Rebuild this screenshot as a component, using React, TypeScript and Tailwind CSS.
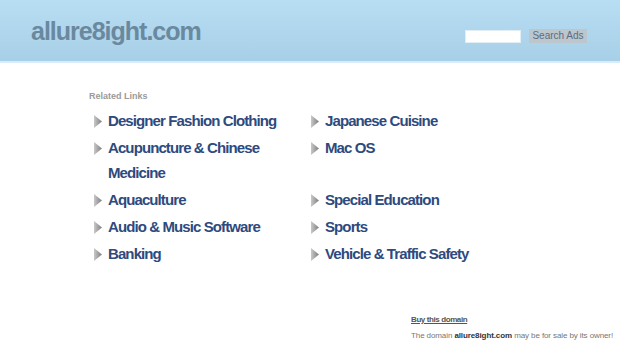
const leftLinks = [
  "Designer Fashion Clothing",
  "Acupuncture & Chinese Medicine",
  "Aquaculture",
  "Audio & Music Software",
  "Banking",
];

const rightLinks = [
  "Japanese Cuisine",
  "Mac OS",
  "Special Education",
  "Sports",
  "Vehicle & Traffic Safety",
];

function Arrow() {
  return (
    <svg width="8" height="13" viewBox="0 0 8 13" className="mt-[7px] shrink-0">
      <defs>
        <linearGradient id="arr" x1="0" y1="0" x2="1" y2="0">
          <stop offset="0" stopColor="#c9c9c9" />
          <stop offset="1" stopColor="#7d7d7d" />
        </linearGradient>
      </defs>
      <polygon points="0,0 8,6.5 0,13" fill="url(#arr)" />
    </svg>
  );
}

function LinkItem({ label }: { label: string }) {
  return (
    <a href="#" className="flex items-start pl-[5px] no-underline">
      <Arrow />
      <span className="ml-[6px] w-[190px] text-[15px] font-bold leading-[25px] tracking-[-0.9px] text-[#2e4a7e]">
        {label}
      </span>
    </a>
  );
}

export default function App() {
  const rows = leftLinks.map((l, i) => [l, rightLinks[i]]);
  return (
    <div className="min-h-[343px] w-[620px] bg-white font-['Liberation_Sans',Arial,sans-serif]">
      <header className="flex h-[63px] items-start justify-between border-b-2 border-[#d9edf8] bg-gradient-to-b from-[#b8def3] to-[#a7cfe7]">
        <h1 className="ml-[31px] mt-[19px] text-[25px] font-bold leading-[25px] tracking-[-1px] text-[#6a889e]">
          allure8ight.com
        </h1>
        <form className="mr-[33px] mt-[29px] flex items-center gap-[8px]">
          <input
            type="text"
            className="h-[13px] w-[56px] border border-[#e2eef6] bg-white outline-none"
          />
          <button
            type="button"
            className="h-[14px] w-[58px] bg-[#bcc6cd] text-[10px] leading-[14px] text-[#5b6d84]"
          >
            Search Ads
          </button>
        </form>
      </header>

      <main className="pl-[89px] pt-[28px]">
        <h2 className="text-[9px] font-bold leading-[11px] text-[#9a9a9a]">
          Related Links
        </h2>
        <div className="mt-[6px] grid grid-cols-[217px_217px] gap-y-[2px]">
          {rows.map(([l, r]) => (
            <>
              <LinkItem key={l} label={l} />
              <LinkItem key={r} label={r} />
            </>
          ))}
        </div>
      </main>

      <footer className="ml-[411px] mt-[49px]">
        <a href="#" className="block text-[8px] font-bold leading-[10px] tracking-[-0.4px] text-[#555] underline">
          Buy this domain
        </a>
        <p className="mt-[6px] text-[8px] leading-[10px] tracking-[-0.1px] text-[#777]">
          The domain <b className="text-[#333]">allure8ight.com</b> may be for sale by its owner!
        </p>
      </footer>
    </div>
  );
}
